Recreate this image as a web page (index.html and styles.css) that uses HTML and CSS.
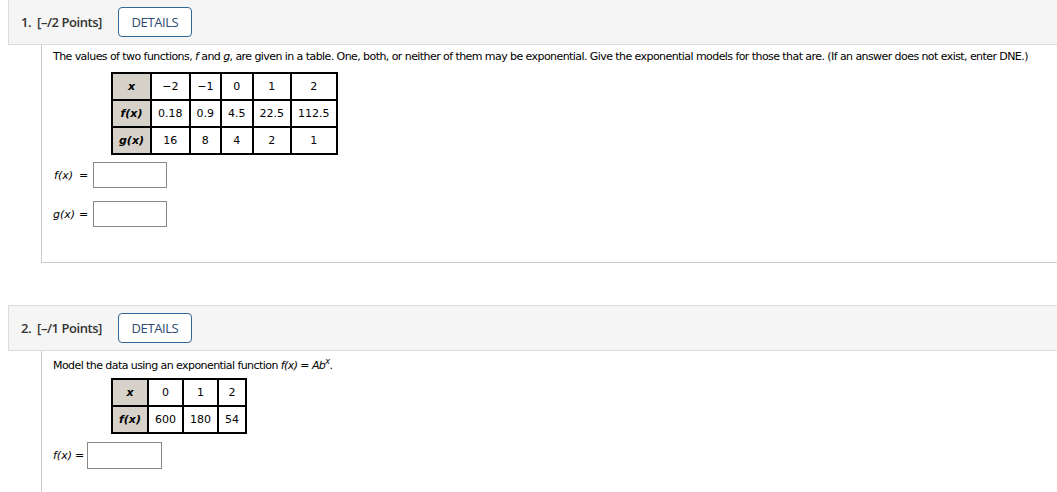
FILE: index.html
```html
<!DOCTYPE html>
<html lang="en">
<head>
<meta charset="utf-8">
<title>Questions</title>
<link rel="stylesheet" href="styles.css">
</head>
<body>
<div class="question first">
  <div class="q-head">
    <span class="q-num">1.</span>
    <span class="q-points">[–/2 Points]</span>
    <button class="details" type="button">DETAILS</button>
  </div>
  <div class="q-body">
    <p class="prompt">The values of two functions, <i>f</i> and <i>g</i>, are given in a table. One, both, or neither of them may be exponential. Give the exponential models for those that are. (If an answer does not exist, enter DNE.)</p>
    <table class="data">
      <tr><th>x</th><td>−2</td><td>−1</td><td>0</td><td>1</td><td>2</td></tr>
      <tr><th>f(x)</th><td>0.18</td><td>0.9</td><td>4.5</td><td>22.5</td><td>112.5</td></tr>
      <tr><th>g(x)</th><td>16</td><td>8</td><td>4</td><td>2</td><td>1</td></tr>
    </table>
    <div class="answers grid">
      <span class="lbl math">f(x)</span><span class="eq">=</span><span class="box"></span>
      <span class="lbl math">g(x)</span><span class="eq">=</span><span class="box"></span>
    </div>
  </div>
</div>

<div class="question second">
  <div class="q-head">
    <span class="q-num">2.</span>
    <span class="q-points">[–/1 Points]</span>
    <button class="details" type="button">DETAILS</button>
  </div>
  <div class="q-body tall">
    <p class="prompt">Model the data using an exponential function <span class="math">f(x)</span> = <span class="math">Ab<sup>x</sup></span>.</p>
    <table class="data">
      <tr><th>x</th><td>0</td><td>1</td><td>2</td></tr>
      <tr><th>f(x)</th><td>600</td><td>180</td><td>54</td></tr>
    </table>
    <div class="answers inline">
      <span class="lbl math">f(x)</span><span class="eq">=</span><span class="box"></span>
    </div>
  </div>
</div>
</body>
</html>
```

FILE: styles.css
```css
html, body {
  background: #ffffff;
}
body {
  margin: 0 0 0 8px;
  overflow: hidden;
  font-family: "DejaVu Sans", Verdana, sans-serif;
  font-size: 11px;
  color: #000;
}
.question.first {
  margin-top: -1px;
}
.question.second {
  margin-top: 42px;
}
.q-head {
  display: flex;
  align-items: center;
  height: 44px;
  padding-left: 12px;
  background: #f5f5f5;
  border: 1px solid #dcdcdc;
  border-right: none;
  font-family: "Open Sans", sans-serif;
}
.q-num,
.q-points {
  font-size: 13px;
  font-weight: 600;
  letter-spacing: -0.45px;
  color: #333;
}
.q-num {
  margin-right: 6px;
}
.q-points {
  margin-right: 16px;
}
.details {
  box-sizing: border-box;
  width: 74px;
  height: 30px;
  padding: 0;
  border: 1px solid #2f6896;
  border-radius: 4px;
  background: #ffffff;
  font-family: "Open Sans", sans-serif;
  font-size: 13px;
  letter-spacing: -0.4px;
  color: #2c4a72;
}
.q-body {
  margin-left: 33px;
  border-left: 1px solid #cccccc;
  border-bottom: 1px solid #cccccc;
  padding: 5px 0 35px 11px;
  letter-spacing: -0.57px;
}
.q-body.tall {
  border-bottom: none;
  padding-bottom: 40px;
}
.prompt {
  margin: 0;
  line-height: 13px;
  white-space: nowrap;
}
.tall .prompt {
  padding-top: 3px;
}
.prompt sup {
  font-size: 8px;
  line-height: 0;
}
.math {
  font-style: italic;
}
.data {
  margin: 9px 0 0 58px;
  border: 1px solid #000;
  border-spacing: 0;
  letter-spacing: 0;
}
.tall .data {
  margin-top: 6px;
}
.data th, .data td {
  border: 1px solid #000;
  padding: 6px;
  line-height: 13px;
  text-align: center;
  white-space: nowrap;
}
.data th {
  background: #d6d2ca;
  font-weight: 700;
  font-style: italic;
}
.answers.grid {
  display: grid;
  grid-template-columns: 20px auto auto;
  justify-content: start;
  align-items: center;
  row-gap: 13px;
  margin-top: 7px;
}
.answers.inline {
  display: flex;
  align-items: center;
  margin-top: 8px;
}
.lbl {
  text-align: right;
  white-space: nowrap;
  letter-spacing: 0;
}
.answers.grid .eq {
  margin: 0 5px 0 6px;
}
.answers.inline .eq {
  margin: 0 3px 0 3px;
}
.box {
  display: block;
  box-sizing: border-box;
  width: 74px;
  height: 26px;
  border: 1px solid #888;
  background: #fff;
}
.answers.inline .box {
  width: 75px;
  height: 27px;
}
```
